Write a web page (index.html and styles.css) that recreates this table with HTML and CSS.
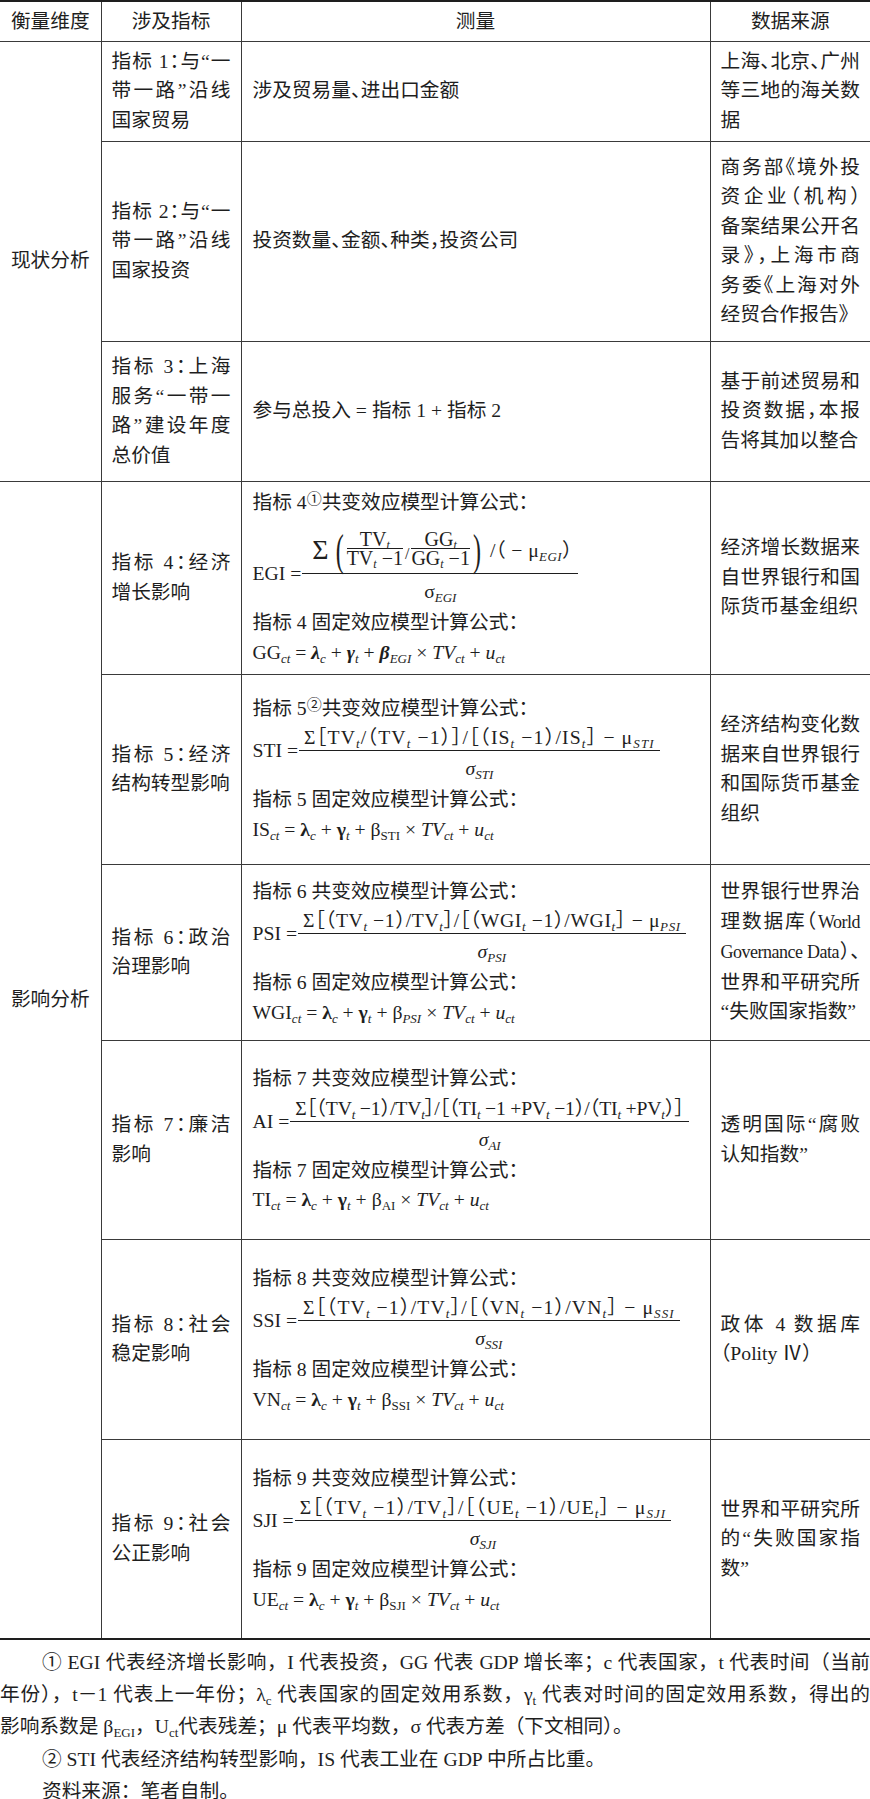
FILE: index.html
```html
<!DOCTYPE html>
<html lang="zh-CN">
<head>
<meta charset="utf-8">
<title>指标体系</title>
<link rel="stylesheet" href="styles.css">
</head>
<body>
<table class="tbl">
  <colgroup><col class="c1"><col class="c2"><col class="c3"><col class="c4"></colgroup>
  <thead>
    <tr class="hd"><th>衡量维度</th><th>涉及指标</th><th>测量</th><th>数据来源</th></tr>
  </thead>
  <tbody>
    <tr class="h100">
      <td rowspan="3" class="dim">现状分析</td>
      <td class="ind"><span class="ln j">指标 1：与“一</span><span class="ln j">带一路”沿线</span><span class="ln">国家贸易</span></td>
      <td class="m"><span class="ln">涉及贸易量、进出口金额</span></td>
      <td class="src"><span class="ln j">上海、北京、广州</span><span class="ln j">等三地的海关数</span><span class="ln">据</span></td>
    </tr>
    <tr class="h200">
      <td class="ind"><span class="ln j">指标 2：与“一</span><span class="ln j">带一路”沿线</span><span class="ln">国家投资</span></td>
      <td class="m"><span class="ln">投资数量、金额、种类，投资公司</span></td>
      <td class="src"><span class="ln j">商务部《境外投</span><span class="ln j">资企业（机构）</span><span class="ln j">备案结果公开名</span><span class="ln j">录》，上海市商</span><span class="ln j">务委《上海对外</span><span class="ln">经贸合作报告》</span></td>
    </tr>
    <tr class="h140">
      <td class="ind"><span class="ln j">指标 3：上海</span><span class="ln j">服务“一带一</span><span class="ln j">路”建设年度</span><span class="ln">总价值</span></td>
      <td class="m"><span class="ln">参与总投入 = 指标 1 + 指标 2</span></td>
      <td class="src"><span class="ln j">基于前述贸易和</span><span class="ln j">投资数据，本报</span><span class="ln">告将其加以整合</span></td>
    </tr>

    <tr class="h192">
      <td rowspan="6" class="dim dim2">影响分析</td>
      <td class="ind"><span class="ln j">指标 4：经济</span><span class="ln">增长影响</span></td>
      <td class="m">
        <span class="ln">指标 4<sup>①</sup>共变效应模型计算公式：</span>
        <div class="eq">
          <span class="lhs lhs-big">EGI =</span>
          <span class="frac">
            <span class="num num-big">
              <span class="sig">Σ</span><span class="bp">(</span><span class="sf"><span class="n">TV<sub><i>t</i></sub></span><span class="d">TV<sub><i>t</i></sub> −1</span></span><span class="sl">/</span><span class="sf"><span class="n">GG<sub><i>t</i></sub></span><span class="d">GG<sub><i>t</i></sub> −1</span></span><span class="bp">)</span><span class="tail">/（ − μ<sub><i>EGI</i></sub>）</span>
            </span>
            <span class="den">σ<sub><i>EGI</i></sub></span>
          </span>
        </div>
        <span class="ln">指标 4 固定效应模型计算公式：</span>
        <span class="ln fm">GG<sub><i>ct</i></sub> = <b><i>λ</i></b><sub><i>c</i></sub> + <b><i>γ</i></b><sub><i>t</i></sub> + <b><i>β</i></b><sub><i>EGI</i></sub> × <i>TV</i><sub><i>ct</i></sub> + <i>u</i><sub><i>ct</i></sub></span>
      </td>
      <td class="src"><span class="ln j">经济增长数据来</span><span class="ln j">自世界银行和国</span><span class="ln">际货币基金组织</span></td>
    </tr>

    <tr class="h190">
      <td class="ind"><span class="ln j">指标 5：经济</span><span class="ln">结构转型影响</span></td>
      <td class="m">
        <span class="ln">指标 5<sup>②</sup>共变效应模型计算公式：</span>
        <div class="eq">
          <span class="lhs">STI =</span>
          <span class="frac">
            <span class="num sp1">Σ［TV<sub><i>t</i></sub>/（TV<sub><i>t</i></sub> −1）］/［（IS<sub><i>t</i></sub> −1）/IS<sub><i>t</i></sub>］ − μ<sub><i>STI</i></sub></span>
            <span class="den"><i>σ</i><sub><i>STI</i></sub></span>
          </span>
        </div>
        <span class="ln">指标 5 固定效应模型计算公式：</span>
        <span class="ln fm">IS<sub><i>ct</i></sub> = <b>λ</b><sub><i>c</i></sub> + <b>γ</b><sub><i>t</i></sub> + β<sub>STI</sub> × <i>TV</i><sub><i>ct</i></sub> + <i>u</i><sub><i>ct</i></sub></span>
      </td>
      <td class="src"><span class="ln j">经济结构变化数</span><span class="ln j">据来自世界银行</span><span class="ln j">和国际货币基金</span><span class="ln">组织</span></td>
    </tr>

    <tr class="h176">
      <td class="ind"><span class="ln j">指标 6：政治</span><span class="ln">治理影响</span></td>
      <td class="m">
        <span class="ln">指标 6 共变效应模型计算公式：</span>
        <div class="eq">
          <span class="lhs">PSI =</span>
          <span class="frac">
            <span class="num sp2">Σ［（TV<sub><i>t</i></sub> −1）/TV<sub><i>t</i></sub>］/［（WGI<sub><i>t</i></sub> −1）/WGI<sub><i>t</i></sub>］ − μ<sub><i>PSI</i></sub></span>
            <span class="den"><i>σ</i><sub><i>PSI</i></sub></span>
          </span>
        </div>
        <span class="ln">指标 6 固定效应模型计算公式：</span>
        <span class="ln fm">WGI<sub><i>ct</i></sub> = <b>λ</b><sub><i>c</i></sub> + <b>γ</b><sub><i>t</i></sub> + β<sub><i>PSI</i></sub> × <i>TV</i><sub><i>ct</i></sub> + <i>u</i><sub><i>ct</i></sub></span>
      </td>
      <td class="src"><span class="ln j">世界银行世界治</span><span class="ln j">理数据库（<span class="cond">World</span></span><span class="ln j"><span class="cond">Governance Data</span>）、</span><span class="ln j">世界和平研究所</span><span class="ln">“失败国家指数”</span></td>
    </tr>

    <tr class="h199">
      <td class="ind"><span class="ln j">指标 7：廉洁</span><span class="ln">影响</span></td>
      <td class="m">
        <span class="ln">指标 7 共变效应模型计算公式：</span>
        <div class="eq">
          <span class="lhs">AI =</span>
          <span class="frac">
            <span class="num sp0">Σ［（TV<sub><i>t</i></sub> −1）/TV<sub><i>t</i></sub>］/［（TI<sub><i>t</i></sub> −1 +PV<sub><i>t</i></sub> −1）/（TI<sub><i>t</i></sub> +PV<sub><i>t</i></sub>）］</span>
            <span class="den"><i>σ</i><sub><i>AI</i></sub></span>
          </span>
        </div>
        <span class="ln">指标 7 固定效应模型计算公式：</span>
        <span class="ln fm">TI<sub><i>ct</i></sub> = <b>λ</b><sub><i>c</i></sub> + <b>γ</b><sub><i>t</i></sub> + β<sub>AI</sub> × <i>TV</i><sub><i>ct</i></sub> + <i>u</i><sub><i>ct</i></sub></span>
      </td>
      <td class="src"><span class="ln j">透明国际“腐败</span><span class="ln">认知指数”</span></td>
    </tr>

    <tr class="h200">
      <td class="ind"><span class="ln j">指标 8：社会</span><span class="ln">稳定影响</span></td>
      <td class="m">
        <span class="ln">指标 8 共变效应模型计算公式：</span>
        <div class="eq">
          <span class="lhs">SSI =</span>
          <span class="frac">
            <span class="num sp1">Σ［（TV<sub><i>t</i></sub> −1）/TV<sub><i>t</i></sub>］/［（VN<sub><i>t</i></sub> −1）/VN<sub><i>t</i></sub>］ − μ<sub><i>SSI</i></sub></span>
            <span class="den"><i>σ</i><sub><i>SSI</i></sub></span>
          </span>
        </div>
        <span class="ln">指标 8 固定效应模型计算公式：</span>
        <span class="ln fm">VN<sub><i>ct</i></sub> = <b>λ</b><sub><i>c</i></sub> + <b>γ</b><sub><i>t</i></sub> + β<sub>SSI</sub> × <i>TV</i><sub><i>ct</i></sub> + <i>u</i><sub><i>ct</i></sub></span>
      </td>
      <td class="src"><span class="ln j">政体 4 数据库</span><span class="ln">（Polity Ⅳ）</span></td>
    </tr>

    <tr class="h200">
      <td class="ind"><span class="ln j">指标 9：社会</span><span class="ln">公正影响</span></td>
      <td class="m">
        <span class="ln">指标 9 共变效应模型计算公式：</span>
        <div class="eq">
          <span class="lhs">SJI =</span>
          <span class="frac">
            <span class="num sp1">Σ［（TV<sub><i>t</i></sub> −1）/TV<sub><i>t</i></sub>］/［（UE<sub><i>t</i></sub> −1）/UE<sub><i>t</i></sub>］ − μ<sub><i>SJI</i></sub></span>
            <span class="den"><i>σ</i><sub><i>SJI</i></sub></span>
          </span>
        </div>
        <span class="ln">指标 9 固定效应模型计算公式：</span>
        <span class="ln fm">UE<sub><i>ct</i></sub> = <b>λ</b><sub><i>c</i></sub> + <b>γ</b><sub><i>t</i></sub> + β<sub>SJI</sub> × <i>TV</i><sub><i>ct</i></sub> + <i>u</i><sub><i>ct</i></sub></span>
      </td>
      <td class="src"><span class="ln j">世界和平研究所</span><span class="ln j">的“失败国家指</span><span class="ln">数”</span></td>
    </tr>
  </tbody>
</table>

<div class="notes">
  <span class="ln j ni">① EGI 代表经济增长影响，I 代表投资，GG 代表 GDP 增长率；c 代表国家，t 代表时间（当前</span>
  <span class="ln j">年份），t－1 代表上一年份；λ<sub>c</sub> 代表国家的固定效用系数，γ<sub>t</sub> 代表对时间的固定效用系数，得出的</span>
  <span class="ln">影响系数是 β<sub>EGI</sub>，U<sub>ct</sub>代表残差；μ 代表平均数，σ 代表方差（下文相同）。</span>
  <span class="ln ni">② STI 代表经济结构转型影响，IS 代表工业在 GDP 中所占比重。</span>
  <span class="ln ni">资料来源：笔者自制。</span>
</div>
</body>
</html>
```

FILE: styles.css
```css
* { box-sizing: border-box; }
html, body { margin: 0; padding: 0; background: #fff; }
body {
  width: 870px;
  font-family: "Liberation Serif", "Noto Sans CJK SC", serif;
  font-size: 19.7px;
  color: #1e1e1e;
}

.tbl {
  width: 870px;
  border-collapse: collapse;
  table-layout: fixed;
  border-top: 2px solid #1e1e1e;
  border-bottom: 2px solid #1e1e1e;
  border-left: hidden;
  border-right: hidden;
  font-feature-settings: "halt";
}
.c1 { width: 101px; }
.c2 { width: 140px; }
.c3 { width: 469px; }
.c4 { width: 160px; }

.tbl th, .tbl td {
  border: 1px solid #3a3a3a;
  padding: 0 10px;
  vertical-align: middle;
  line-height: 29.5px;
  font-weight: normal;
  text-align: left;
}
.tbl th { text-align: center; }
.tbl .m { padding-left: 11px; }
.tbl .dim { text-align: center; padding: 0; }
.tbl .dim2 { padding-bottom: 120px; }

.hd { height: 40px; }
.h100 { height: 100px; }
.h140 { height: 140px; }
.h176 { height: 176px; }
.h190 { height: 190px; }
.h192 { height: 193px; }
.h199 { height: 199px; }
.h200 { height: 200px; }

.ln { display: block; white-space: nowrap; }
.j { text-align: justify; text-align-last: justify; }
.cond { font-size: 18px; letter-spacing: -0.5px; }

sup {
  font-size: 15px;
  vertical-align: 5px;
  line-height: 0;
}
sub {
  font-size: 13px;
  vertical-align: -4px;
  line-height: 0;
}

/* formulas */
.eq { display: flex; align-items: flex-start; white-space: nowrap; }
.lhs { line-height: 29.5px; margin-top: 13px; margin-right: 1px; }
.lhs-big { margin-top: 42px; }
.frac { display: inline-flex; flex-direction: column; align-items: center; }
.num {
  line-height: 28px;
  height: 28px;
  padding: 0 5px;
  border-bottom: 1px solid #1e1e1e;
}
.sp0 { letter-spacing: -0.2px; }
.sp1 { letter-spacing: 1.1px; }
.sp2 { letter-spacing: 0.6px; }
.num-big {
  height: 57px;
  display: flex;
  align-items: center;
  padding: 9px 6px 0 10px;
  line-height: 20px;
}
.den { line-height: 34px; height: 34px; }
.sig { font-size: 28px; margin-right: 4px; }
.bp {
  display: inline-block;
  font-size: 24px;
  transform: scaleY(1.85);
  margin: 0 3px;
}
.sf {
  display: inline-flex;
  flex-direction: column;
  align-items: center;
  font-size: 20px;
}
.sf .n { line-height: 17px; border-bottom: 1px solid #1e1e1e; padding: 0 1px; width: 100%; text-align: center; }
.sf .d { line-height: 19px; }
.sf sub { font-size: 12px; vertical-align: -3px; }
.sl { font-size: 16px; margin: 8px 2px 0; }
.tail { margin-left: 6px; letter-spacing: 0.4px; }

/* notes */
.notes {
  margin-top: 6px;
  font-size: 19.7px;
  line-height: 32.2px;
}
.notes .ni { text-indent: 42px; }
```
